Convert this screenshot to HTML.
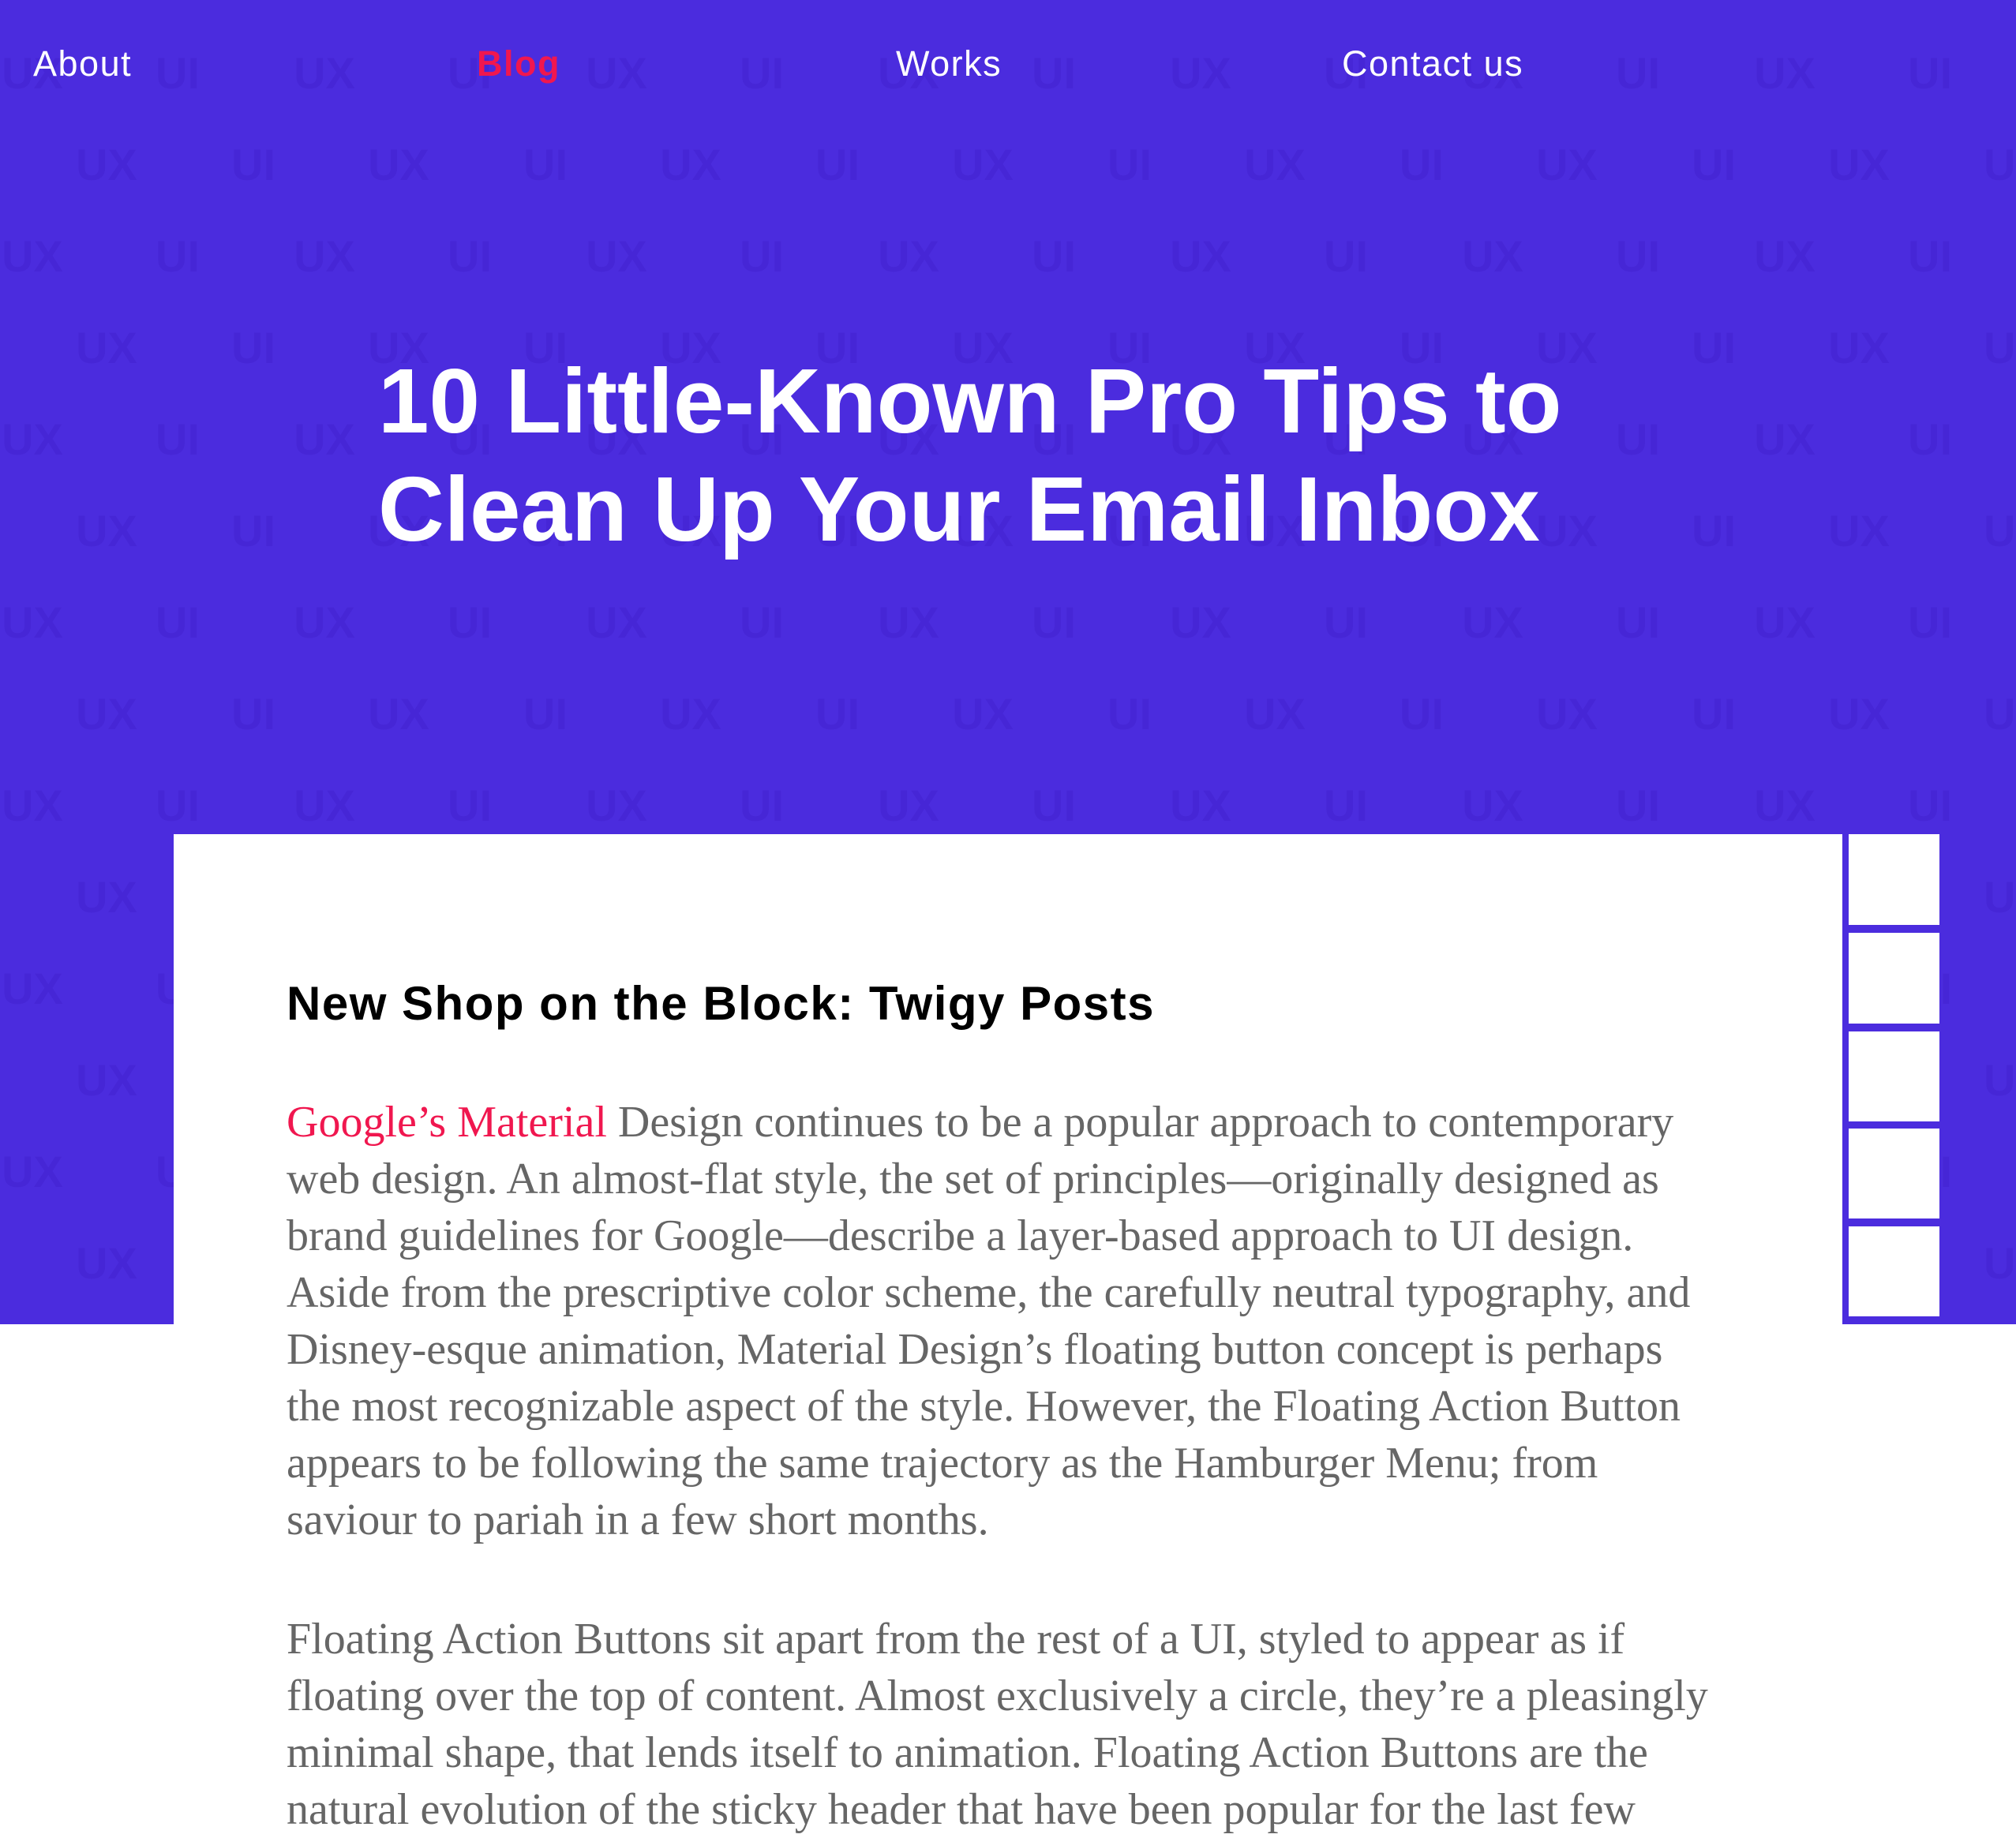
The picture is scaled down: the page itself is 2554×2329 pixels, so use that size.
<!DOCTYPE html>
<html><head><meta charset="utf-8"><style>
html,body{margin:0;padding:0;}
body{width:2554px;height:2310px;position:relative;overflow:hidden;background:#fff;font-family:"Liberation Sans",sans-serif;}
#hero{position:absolute;left:0;top:0;width:2554px;height:1678px;background:#4b2cde;}
#hero svg{position:absolute;left:0;top:0;}
.nav{position:absolute;top:54px;font-size:45px;color:#fff;line-height:54px;letter-spacing:1.5px;}
h1{position:absolute;left:479px;top:440px;margin:0;font-size:116px;line-height:137px;color:#fff;font-weight:bold;letter-spacing:0px;}
#card{position:absolute;left:220px;top:1057px;width:2114px;height:1253px;background:#fff;}
h2{position:absolute;left:363px;top:1238px;margin:0;font-size:60px;line-height:68px;font-weight:bold;color:#000;letter-spacing:1.5px;}
.p{position:absolute;left:363px;font-family:"Liberation Serif",serif;font-size:56px;line-height:72px;color:#666;white-space:nowrap;}
.p span{color:#f0174f;}
#side{position:absolute;left:2334px;top:1057px;width:124px;height:621px;background:#4b2cde;}
.box{position:absolute;left:8px;width:115px;background:#fff;}
</style></head><body>
<div id="hero">
<svg width="2554" height="1678" xmlns="http://www.w3.org/2000/svg">
<defs><pattern id="pt" width="370" height="232" patternUnits="userSpaceOnUse" x="0" y="0">
<g font-family="Liberation Sans" font-weight="bold" font-size="56" fill="#4626d6" text-anchor="middle">
<text x="41" y="112">UX</text><text x="225" y="112">UI</text>
<text x="135" y="228">UX</text><text x="321" y="228">UI</text>
</g></pattern></defs>
<rect width="2554" height="1678" fill="url(#pt)"/>
</svg>
<div class="nav" style="left:42px">About</div>
<div class="nav" style="left:604px;color:#f0174f;font-weight:bold">Blog</div>
<div class="nav" style="left:1135px">Works</div>
<div class="nav" style="left:1700px">Contact us</div>
<h1>10 Little-Known Pro Tips to<br>Clean Up Your Email Inbox</h1>
</div>
<div id="card"></div>
<div id="side">
<div class="box" style="top:0;height:115px"></div>
<div class="box" style="top:125px;height:115px"></div>
<div class="box" style="top:250px;height:114px"></div>
<div class="box" style="top:373px;height:114px"></div>
<div class="box" style="top:497px;height:114px"></div>
</div>
<h2>New Shop on the Block: Twigy Posts</h2>
<div class="p" style="top:1386px"><span>Google’s Material</span> Design continues to be a popular approach to contemporary<br>web design. An almost-flat style, the set of principles—originally designed as<br>brand guidelines for Google—describe a layer-based approach to UI design.<br>Aside from the prescriptive color scheme, the carefully neutral typography, and<br>Disney-esque animation, Material Design’s floating button concept is perhaps<br>the most recognizable aspect of the style. However, the Floating Action Button<br>appears to be following the same trajectory as the Hamburger Menu; from<br>saviour to pariah in a few short months.</div>
<div class="p" style="top:2041px">Floating Action Buttons sit apart from the rest of a UI, styled to appear as if<br>floating over the top of content. Almost exclusively a circle, they’re a pleasingly<br>minimal shape, that lends itself to animation. Floating Action Buttons are the<br>natural evolution of the sticky header that have been popular for the last few</div>
</body></html>
